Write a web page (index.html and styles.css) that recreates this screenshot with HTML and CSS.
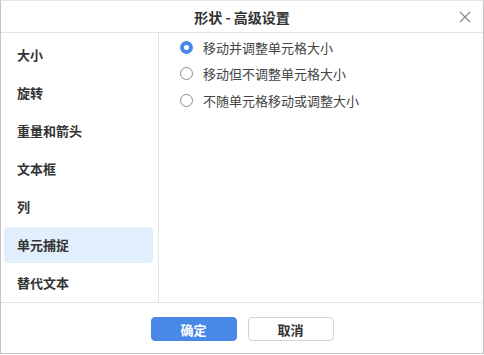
FILE: index.html
```html
<!DOCTYPE html>
<html lang="zh-CN">
<head>
  <meta charset="UTF-8">
  <title>形状 - 高级设置</title>
  <link rel="stylesheet" href="styles.css">
</head>
<body>
  <div class="dialog">
    <div class="header">
      <div class="title">形状 - 高级设置</div>
      <svg class="close" width="12" height="12" viewBox="0 0 12 12">
        <path d="M1 1 L11 11 M11 1 L1 11" stroke="#8a8a8a" stroke-width="1.2" fill="none"/>
      </svg>
    </div>

    <div class="body">
      <div class="side">
        <div class="item">大小</div>
        <div class="item">旋转</div>
        <div class="item">重量和箭头</div>
        <div class="item">文本框</div>
        <div class="item">列</div>
        <div class="item active">单元捕捉</div>
        <div class="item">替代文本</div>
      </div>
      <div class="content">
        <label class="radio"><span class="dot checked"></span>移动并调整单元格大小</label>
        <label class="radio"><span class="dot"></span>移动但不调整单元格大小</label>
        <label class="radio"><span class="dot"></span>不随单元格移动或调整大小</label>
      </div>
    </div>

    <div class="footer">
      <button class="btn primary">确定</button>
      <button class="btn">取消</button>
    </div>
  </div>
</body>
</html>
```

FILE: styles.css
```css
body {
  margin: 0;
  padding: 0;
  font-family: 'Noto Sans CJK SC', 'Noto Sans', sans-serif;
  background: #fff;
  color: #333;
}

.dialog {
  width: 484px;
  height: 354px;
  box-sizing: border-box;
  border: 1px solid #c4c4c4;
  border-top-color: #e6e6e6;
  display: flex;
  flex-direction: column;
}

.header {
  height: 31px;
  border-bottom: 1px solid #e4e4e4;
  display: flex;
  align-items: center;
  justify-content: center;
  position: relative;
}

.title {
  font-size: 14px;
  font-weight: bold;
  color: #333;
  padding-top: 1px;
}

.close {
  position: absolute;
  right: 12px;
  top: 10px;
}

.body {
  display: flex;
  height: 269px;
  border-bottom: 1px solid #e4e4e4;
}

.side {
  width: 158px;
  border-right: 1px solid #e4e4e4;
  padding: 4px 5px 0 3px;
  box-sizing: border-box;
  display: flex;
  flex-direction: column;
  gap: 2px;
}

.item {
  height: 36px;
  line-height: 36px;
  padding-left: 13px;
  font-size: 13px;
  font-weight: bold;
  color: #333;
  border-radius: 4px;
}

.item.active {
  background: #e1eefc;
}

.content {
  padding: 1px 0 0 21px;
  display: flex;
  flex-direction: column;
}

.radio {
  display: flex;
  align-items: center;
  height: 26.5px;
  font-size: 13px;
  color: #444;
}

.dot {
  width: 13px;
  height: 13px;
  box-sizing: border-box;
  border: 1px solid #8c8c8c;
  border-radius: 50%;
  margin-right: 10px;
}

.dot.checked {
  border: 4px solid #4a88e8;
}

.footer {
  flex: 1;
  display: flex;
  justify-content: center;
  align-items: center;
  gap: 11px;
  padding-top: 2px;
}

.btn {
  width: 86px;
  height: 24px;
  border: 1px solid #d4d4d4;
  border-radius: 4px;
  background: #fff;
  color: #333;
  font-family: inherit;
  font-size: 13px;
  font-weight: bold;
  padding: 0;
}

.btn.primary {
  background: #4a88e8;
  border-color: #4a88e8;
  color: #fff;
}
```
